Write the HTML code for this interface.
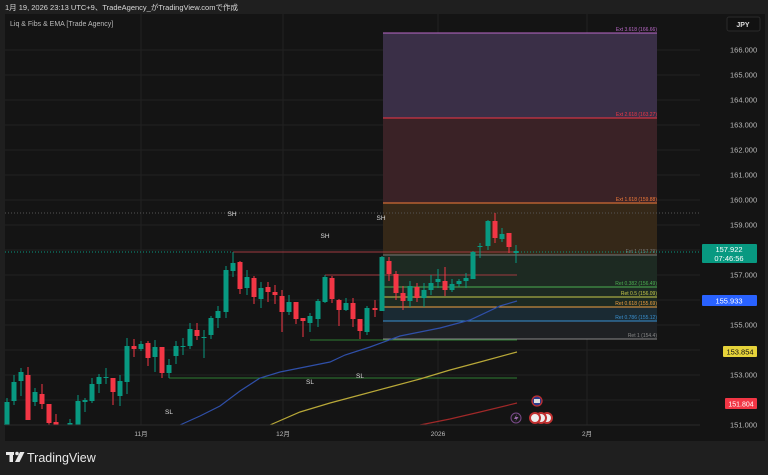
<!DOCTYPE html>
<html><head><meta charset="utf-8"><style>
html,body{margin:0;padding:0;background:#1f1f1f;width:768px;height:475px;overflow:hidden;font-family:"Liberation Sans","Noto Sans CJK JP",sans-serif}
svg{position:absolute;left:0;top:0}
</style></head><body>
<svg id="s" width="768" height="475" viewBox="0 0 768 475" xmlns="http://www.w3.org/2000/svg" font-family="Liberation Sans, Noto Sans CJK JP, sans-serif">
<rect x="0" y="0" width="768" height="475" fill="#1f1f1f"/>
<text x="5" y="10" font-size="7.5" fill="#d8d8d8">1月 19, 2026 23:13 UTC+9、TradeAgency_がTradingView.comで作成</text>
<rect x="5" y="14" width="760" height="427" fill="#141414"/>
<g id="grid" stroke="#222" stroke-width="1"></g>
<rect x="383" y="33" width="274" height="85" fill="#3a2f47"/>
<rect x="383" y="118" width="274" height="85" fill="#3a2226"/>
<rect x="383" y="203" width="274" height="52" fill="#352818"/>
<rect x="383" y="255" width="274" height="52" fill="#1d2a22"/>
<rect x="383" y="307" width="274" height="14" fill="#1a2a33"/>
<rect x="383" y="321" width="274" height="18" fill="#1f2124"/>
<line x1="383" y1="33" x2="657" y2="33" stroke="#ba68c8"/>
<line x1="383" y1="118" x2="657" y2="118" stroke="#f23645"/>
<line x1="383" y1="203" x2="657" y2="203" stroke="#f57c3a"/>
<line x1="383" y1="255" x2="657" y2="255" stroke="#777"/>
<line x1="383" y1="287" x2="657" y2="287" stroke="#4caf50"/>
<line x1="383" y1="297" x2="657" y2="297" stroke="#c8c84a"/>
<line x1="383" y1="307" x2="657" y2="307" stroke="#f0a040"/>
<line x1="383" y1="321" x2="657" y2="321" stroke="#3a90d0"/>
<line x1="383" y1="339" x2="657" y2="339" stroke="#888"/>
<g font-size="5" text-anchor="end">
<text x="657" y="31" fill="#ba68c8">Ext 3.618 (166.66)</text>
<text x="657" y="116" fill="#f23645">Ext 2.618 (163.27)</text>
<text x="657" y="201" fill="#f57c3a">Ext 1.618 (159.88)</text>
<text x="657" y="253" fill="#777">Ext 1 (157.79)</text>
<text x="657" y="285" fill="#4caf50">Ret 0.382 (156.49)</text>
<text x="657" y="295" fill="#c8c84a">Ret 0.5 (156.09)</text>
<text x="657" y="305" fill="#f0a040">Ret 0.618 (155.69)</text>
<text x="657" y="319" fill="#3a90d0">Ret 0.786 (155.12)</text>
<text x="657" y="337" fill="#888">Ret 1 (154.4)</text>
</g>
<line x1="5" y1="213" x2="700" y2="213" stroke="#555" stroke-dasharray="1,2"/>
<line x1="5" y1="252" x2="700" y2="252" stroke="#089981" stroke-dasharray="1,2"/>
<line x1="233" y1="252" x2="517" y2="252" stroke="#a03a40"/>
<line x1="325" y1="275" x2="517" y2="275" stroke="#a03a40"/>
<line x1="310" y1="340" x2="517" y2="340" stroke="#2e7d32"/>
<line x1="169" y1="378" x2="517" y2="378" stroke="#2e7d32"/>
<polyline fill="none" stroke="#2f4fa8" stroke-width="1.2" points="180,425 200,416 220,406 240,391 260,378 280,372 300,368 330,362 345,355 370,347 400,336 440,328 470,320 500,306 517,301"/>
<polyline fill="none" stroke="#b8a838" stroke-width="1.2" points="270,425 300,412 330,403 360,395 390,387 420,379 450,370 480,362 517,352"/>
<polyline fill="none" stroke="#a02828" stroke-width="1.2" points="420,425 450,419 480,412 517,403"/>
<g id="candles"></g>
<g font-size="6.5" fill="#ddd" text-anchor="middle">
<text x="232" y="216">SH</text><text x="325" y="238">SH</text><text x="381" y="220">SH</text>
<text x="169" y="414">SL</text><text x="310" y="384">SL</text><text x="360" y="378">SL</text>
</g>
<circle cx="537" cy="401" r="5" fill="#2a3a8a" stroke="#c03030" stroke-width="1.3"/>
<rect x="534" y="399" width="6" height="4" fill="#ddd"/>
<circle cx="516" cy="418" r="5" fill="#1a1a1a" stroke="#7a4a8a"/>
<path d="M517 414 L514 419 L516.5 419 L515 422 L518.5 417 L516 417 Z" fill="#9a6aaa"/>
<circle cx="547" cy="418" r="5" fill="#eee" stroke="#c03030" stroke-width="2"/>
<circle cx="541" cy="418" r="5" fill="#eee" stroke="#c03030" stroke-width="2"/>
<circle cx="535" cy="418" r="5" fill="#eee" stroke="#c03030" stroke-width="2"/>
<line x1="5" y1="425" x2="700" y2="425" stroke="#2a2a2a"/>
<g font-size="6.5" fill="#bbb" text-anchor="middle">
<text x="141" y="436">11月</text><text x="283" y="436">12月</text><text x="438" y="436">2026</text><text x="587" y="436">2月</text>
</g>
<g id="axis" font-size="7.5" fill="#bbb"></g>
<rect x="727" y="17" width="33" height="14" rx="2" fill="#111" stroke="#2a2a2a"/>
<text x="743" y="27" font-size="7" fill="#ddd" text-anchor="middle" font-weight="bold">JPY</text>
<rect x="702" y="244" width="55" height="19" rx="1" fill="#089981"/>
<text x="729" y="252" font-size="7.5" fill="#fff" text-anchor="middle">157.922</text>
<text x="729" y="261" font-size="7.5" fill="#fff" text-anchor="middle">07:46:56</text>
<rect x="702" y="295" width="55" height="11" rx="1" fill="#2962ff"/>
<text x="729" y="303.5" font-size="7.5" fill="#fff" text-anchor="middle">155.933</text>
<rect x="723" y="346" width="34" height="11" rx="1" fill="#e6d33a"/>
<text x="740" y="354.5" font-size="7.5" fill="#111" text-anchor="middle">153.854</text>
<rect x="725" y="398" width="32" height="11" rx="1" fill="#f23645"/>
<text x="741" y="406.5" font-size="7" fill="#fff" text-anchor="middle">151.804</text>
<rect x="6" y="452" width="8" height="3" fill="#e8e8e8"/><rect x="9.5" y="452" width="3.5" height="10" fill="#e8e8e8"/>
<circle cx="17" cy="453.5" r="1.8" fill="#e8e8e8"/><polygon points="20,452 24.5,452 19.5,462 15,462" fill="#e8e8e8"/>
<text x="27" y="462" font-size="12.5" fill="#e8e8e8">TradingView</text>
<text x="10" y="26" font-size="7" fill="#bbb">Liq &amp; Fibs &amp; EMA [Trade Agency]</text>
</svg>
<script>
var NS="http://www.w3.org/2000/svg";
function el(t,a,p){var e=document.createElementNS(NS,t);for(var k in a)e.setAttribute(k,a[k]);p.appendChild(e);return e;}
var g=document.getElementById('grid');
for(var p=151;p<=166;p++){var y=200+(160-p)*25;el('line',{x1:5,y1:y,x2:700,y2:y},g);}
[141,283,438,587].forEach(function(x){el('line',{x1:x,y1:14,x2:x,y2:425},g);});
var ax=document.getElementById('axis');
[166,165,164,163,162,161,160,159,157,155,153,151].forEach(function(p){var y=200+(160-p)*25;var t=el('text',{x:730,y:y+2.5},ax);t.textContent=p+'.000';});
var C=[[7,'g',402,425,398,425],[14,'g',382,401,375,405],[21,'g',372,381,368,396],[28,'r',375,420,367,420],[35,'g',392,402,388,406],[42,'r',394,404,384,409],[49,'r',404,423,404,425],[56,'r',422,425,414,425],[70,'g',423,425,419,425],[78,'g',401,425,395,425],[85,'g',400,402,398,412],[92,'g',384,401,378,403],[99,'g',377,384,374,393],[106,'g',377,378,368,384],[113,'r',378,392,378,405],[120,'g',381,396,375,406],[127,'g',346,382,338,394],[134,'r',346,349,339,357],[141,'g',344,349,341,351],[148,'r',343,358,341,366],[155,'g',347,357,340,372],[162,'r',347,373,347,378],[169,'g',365,373,359,378],[176,'g',346,356,341,364],[183,'g',346,347,338,355],[190,'g',329,346,323,349],[197,'r',330,336,323,340],[204,'g',337,338,330,358],[211,'g',318,335,316,339],[218,'g',311,318,306,328],[226,'g',270,312,266,318],[233,'g',263,271,252,277],[240,'r',262,289,261,294],[247,'g',277,288,270,295],[254,'r',278,297,276,304],[261,'g',288,299,282,308],[268,'r',287,292,282,302],[275,'r',292,295,285,304],[282,'r',296,312,290,332],[289,'g',302,312,295,315],[296,'r',302,319,302,324],[303,'r',318,321,318,337],[310,'g',316,323,313,332],[318,'g',301,319,299,327],[325,'g',277,302,275,303],[332,'r',278,299,276,303],[339,'r',300,310,299,326],[346,'g',303,310,298,311],[353,'r',303,319,298,327],[360,'r',319,331,319,339],[367,'g',308,332,306,335],[375,'r',308,310,300,317],[382,'g',257,311,256,311],[389,'r',261,274,257,281],[396,'r',274,293,271,300],[403,'r',293,301,286,310],[410,'g',286,301,281,307],[417,'r',287,298,283,302],[424,'g',290,298,283,307],[431,'g',283,290,275,295],[438,'g',279,282,269,288],[445,'r',281,290,267,296],[452,'g',284,290,279,292],[459,'g',281,284,279,287],[466,'g',278,281,273,288],[473,'g',252,279,251,279],[480,'g',246,247,243,258],[488,'g',221,246,220,250],[495,'r',221,238,213,243],[502,'g',234,239,228,242],[509,'r',233,247,233,253],[516,'g',251,253,245,263]];
var cg=document.getElementById('candles');
C.forEach(function(c){var col=c[1]=='g'?'#089981':'#f23645';
el('line',{x1:c[0],y1:c[4],x2:c[0],y2:c[5],stroke:col,'stroke-width':1},cg);
el('rect',{x:c[0]-2.5,y:c[2],width:5,height:Math.max(1,c[3]-c[2]),fill:col},cg);});
</script>
</body></html>
